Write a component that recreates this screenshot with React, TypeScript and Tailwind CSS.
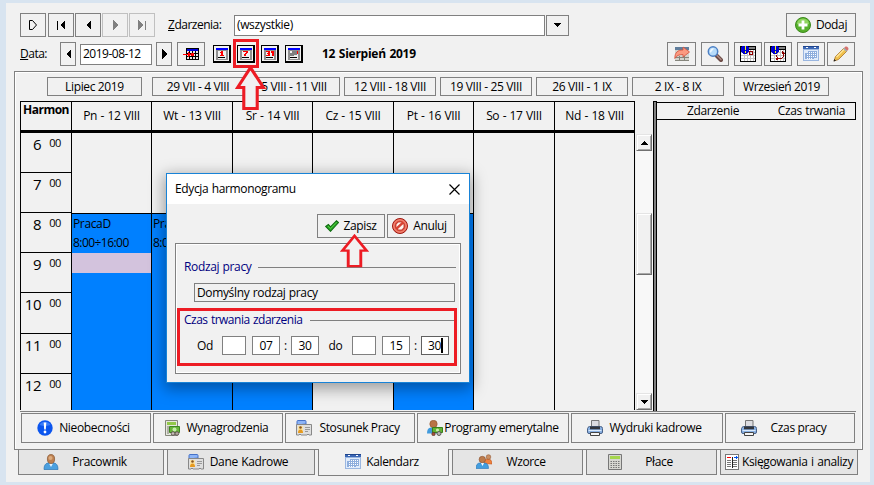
import type { ReactNode } from 'react'

const days = [
  { label: 'Pn - 12 VIII', w: 'w-[80px]', work: true, marked: true },
  { label: 'Wt - 13 VIII', w: 'w-[81px]', work: true },
  { label: 'Śr - 14 VIII', w: 'w-[80px]', work: true },
  { label: 'Cz - 15 VIII', w: 'w-[81px]', work: false },
  { label: 'Pt - 16 VIII', w: 'w-[80px]', work: true },
  { label: 'So - 17 VIII', w: 'w-[81px]', work: false },
  { label: 'Nd - 18 VIII', w: 'w-[80px]', work: false },
]

const hours = [
  { h: 6, size: 'h-[40px]' },
  { h: 7, size: 'h-[40px]' },
  { h: 8, size: 'h-[40px]' },
  { h: 9, size: 'h-[40px]' },
  { h: 10, size: 'h-[41px]' },
  { h: 11, size: 'h-[40px]' },
  { h: 12, size: 'h-[37px]' },
]

const periods = [
  { label: 'Lipiec 2019', cls: 'w-[95px] mr-[10px]' },
  { label: '29 VII - 4 VIII', cls: 'w-[92px] mr-[4px]' },
  { label: '5 VIII - 11 VIII', cls: 'w-[92px] mr-[4px]' },
  { label: '12 VIII - 18 VIII', cls: 'w-[92px] mr-[4px]' },
  { label: '19 VIII - 25 VIII', cls: 'w-[92px] mr-[4px]' },
  { label: '26 VIII - 1 IX', cls: 'w-[92px] mr-[4px]' },
  { label: '2 IX - 8 IX', cls: 'w-[92px] mr-[10px]' },
  { label: 'Wrzesień 2019', cls: 'w-[95px]' },
]

/* ---------- icons ---------- */

function Svg({ children, w = 16, h = 16, crisp = false }: { children: ReactNode; w?: number; h?: number; crisp?: boolean }) {
  return (
    <svg width={w} height={h} viewBox={`0 0 ${w} ${h}`} className="block shrink-0" fill="none" shapeRendering={crisp ? 'crispEdges' : 'auto'}>
      {children}
    </svg>
  )
}

const PlusIcon = () => (
  <Svg>
    <circle cx="8" cy="8" r="7.5" fill="#57b02c" stroke="#3d8a1d" />
    <path d="M2 7a6 5.5 0 0 1 12 0q-6 2-12 0" fill="#8fd45f" />
    <path d="M6.6 3.5h2.8v3.1h3.1v2.8H9.4v3.1H6.6V9.4H3.5V6.6h3.1z" fill="#fff" />
  </Svg>
)

const ShareIcon = () => (
  <Svg>
    <path d="M1 2h14v13H1z" fill="#d3d3cc" />
    <path d="M1 1h14v3H1z" fill="#5f7d9c" />
    <path d="M1 11.5h14M5.5 10v5M10.500 10v5M1 14.5h14" stroke="#85857c" />
    <path d="M.8 12.500C.8 6.500 3.500 4 9 4V1l6.500 5L9 11V8.500c-4 0-6.500 1-8.200 4z" fill="#fb9a80" stroke="#d6503c" strokeWidth=".8" />
  </Svg>
)

const LensIcon = () => (
  <Svg>
    <path d="M9.5 9.5l4.500 4.500" stroke="#6b4a45" strokeWidth="4" strokeLinecap="round" />
    <path d="M10 9.500l4 4" stroke="#b08b84" strokeWidth="1.300" strokeLinecap="round" />
    <circle cx="6" cy="5.500" r="4.700" fill="#b8dcfa" stroke="#4d80c4" strokeWidth="1.500" />
    <path d="M3 5.500a3 3 0 0 1 4-3L3.500 7z" fill="#eef8ff" />
  </Svg>
)

function AlertTable({ cycle = false }: { cycle?: boolean }) {
  return (
    <Svg crisp>
      <path d="M0 0h16v16H0z" fill="#000" />
      <path d="M1 4h14v11H1z" fill="#fff" />
      <path d="M8 1h7v2H8z" fill="#808080" />
      <path d="M4 4h1v11H4zM7 4h1v11H7zM10 4h1v11h-1zM13 4h1v11h-1zM1 6h14v1H1zM1 9h14v1H1zM1 12h14v1H1z" fill="#c4c4c4" />
      <path d="M2 0h6v1h1v5H8v1H7v1H3V7H2V6H1V1h1z" fill="#0000d0" />
      <path d="M5 0h1v4H5zM5 5h1v2H5z" fill="#ff0" />
      {cycle ? (
        <path d="M12 5h1v1h1v1h1v1h-3zM13 8h1v3h-1zM12 11h1v1h-1zM9 12h3v1H9zM6 9h1v2H6zM7 11h1v1H7zM6 12h3v1H8v1H6z" fill="#900000" />
      ) : (
        <path d="M9 5h4v4H9zM10 6v2h2V6z" fill="#900000" fillRule="evenodd" />
      )}
    </Svg>
  )
}

const CalendarIcon = () => (
  <Svg crisp>
    <path d="M0 0h16v15H0z" fill="#9ab6e0" />
    <path d="M1 4h14v10H1z" fill="#e1ecfb" />
    <path d="M0 0h16v3H0z" fill="#3b67b5" />
    <path d="M0 0h16v1H0z" fill="#1f458d" />
    <path d="M3 1h2v1H3zM11 1h2v1h-2z" fill="#fff" />
    <path d="M5 5h9v7H5zM2 7h9v6H2z" fill="#8eaedd" />
    <path d="M6 6h1v1H6zM8 6h1v1H8zM10 6h1v1h-1zM12 6h1v1h-1zM4 8h1v1H4zM6 8h1v1H6zM8 8h1v1H8zM10 8h1v1h-1zM12 8h1v1h-1zM4 10h1v1H4zM6 10h1v1H6zM8 10h1v1H8zM10 10h1v1h-1zM12 10h1v1h-1zM4 12h1v1H4zM6 12h1v1H6zM8 12h1v1H8z" fill="#fff" />
  </Svg>
)

const PencilIcon = () => (
  <Svg>
    <path d="M1 15l1.500-4.500L11 2l3 3-8.500 8.500z" fill="#f0c04c" stroke="#a7742a" strokeWidth=".8" />
    <path d="M3.500 11L11.500 3" stroke="#ffe69b" strokeWidth="1.200" />
    <path d="M10.500 2.500L12.500.5q1.500-.5 2.700 1.200.8 1.300-.2 2.300l-1.500 1.500z" fill="#d7716c" />
    <path d="M10.200 2.800l3 3 1-1-3-3z" fill="#9eb2b8" />
    <path d="M.5 15.500l.8-2.500 1.700 1.700z" fill="#222" />
  </Svg>
)

const GoToDateIcon = () => (
  <Svg w={16} h={12} crisp>
    <path d="M3 0h13v12H3z" fill="#000" />
    <path d="M4 1h11v2H4z" fill="#0000e0" />
    <path d="M4 3h2v2H4zM7 3h2v2H7zM10 3h2v2h-2zM13 3h2v2h-2zM4 6h2v2H4zM7 6h2v2H7zM10 6h2v2h-2zM13 6h2v2h-2zM4 9h2v2H4zM7 9h2v2H7zM10 9h2v2h-2zM13 9h2v2h-2z" fill="#e8e8e8" />
    <path d="M0 6h8v1H0zM5 4h1v5H5zM6 5h1v3H6zM8 5h3v3H8z" fill="#f00" />
  </Svg>
)

function ViewIcon({ children }: { children: ReactNode }) {
  return (
    <Svg w={18} h={18} crisp>
      <path d="M0 0h18v18H0z" fill="#000" />
      <path d="M1 1h15v15H1z" fill="#f1f1f1" />
      <path d="M3 3h12v12H3z" fill="#909090" />
      <path d="M5 6h8v8H5z" fill="#f1f1f1" />
      <path d="M3 3h12v2H3z" fill="#0000ff" />
      <path d="M5 12h7v1H5z" fill="#000" />
      {children}
    </Svg>
  )
}

const AlertIcon = () => (
  <Svg>
    <circle cx="8" cy="8" r="7.700" fill="#0b55ee" />
    <path d="M2.500 5A6.300 6.300 0 0 1 13.500 5Q8 7 2.500 5z" fill="#3a7cf8" />
    <path d="M6.700 2.500h2.600l-.5 7H7.200z" fill="#fff" />
    <circle cx="8" cy="12" r="1.400" fill="#fff" />
  </Svg>
)

const CalcMoneyIcon = () => (
  <Svg>
    <path d="M1.500.5h12v15h-12z" fill="#e5e6dd" stroke="#84867b" />
    <path d="M3 2h9v3H3z" fill="#92c849" />
    <path d="M3 7h2M3 9h2M3 11h2M3 13h2" stroke="#7a7a70" strokeWidth="1.100" />
    <path d="M5.500 6.500h10v6h-10z" fill="#68b53a" stroke="#3f8621" />
    <circle cx="10.500" cy="9.500" r="2" fill="#c5edaa" />
    <circle cx="9" cy="13.500" r="1.800" fill="#c8c2bc" stroke="#635a53" />
    <circle cx="13" cy="13.500" r="1.800" fill="#b6aaa2" stroke="#635a53" />
  </Svg>
)

const BadgeIcon = () => (
  <Svg>
    <path d="M1 5V1.500Q1 .5 2 .5h7q1 0 1 1V4z" fill="#8db4f7" stroke="#4672c8" />
    <path d="M.5 4.500h15v10.500H13l-1-1-1 1H5l-1-1-1 1H.5z" fill="#dfdfdf" stroke="#888" />
    <path d="M2 6h5v7H2z" fill="#fbe4a3" />
    <circle cx="4.500" cy="7.500" r="1.300" fill="#8b531c" />
    <path d="M2 13q0-3.500 2.500-3.500T7 13z" fill="#e59a20" />
    <path d="M9 7.500h5M9 9.500h5M9 11.500h3" stroke="#999" />
  </Svg>
)

const PersonIcon = () => (
  <Svg>
    <path d="M1 15.500q0-6 4-6.500h6q4 .5 4 6.500z" fill="#4ba0df" stroke="#2874b4" strokeWidth=".7" />
    <path d="M6 9.500h4L8 13z" fill="#e8f3ff" />
    <ellipse cx="8" cy="5" rx="3.600" ry="4.500" fill="#bd8051" stroke="#875630" strokeWidth=".7" />
    <ellipse cx="7.500" cy="4" rx="2" ry="2" fill="#dcab7e" />
  </Svg>
)

const PensionIcon = () => (
  <Svg>
    <path d="M0 13.500Q0 7.500 4 7.500h5q3 0 4 6z" fill="#429bdd" />
    <circle cx="6.500" cy="4" r="3.700" fill="#b97446" stroke="#8b522b" strokeWidth=".6" />
    <path d="M5.500 7.500h10v5h-10z" fill="#63b334" stroke="#36801b" />
    <circle cx="10.500" cy="10" r="1.600" fill="#c8efab" />
    <circle cx="6.500" cy="14" r="1.700" fill="#a6503a" stroke="#58352b" strokeWidth=".7" />
    <circle cx="12" cy="13.500" r="2" fill="#b6b6b0" stroke="#5b5b57" />
  </Svg>
)

const PeopleIcon = () => (
  <Svg>
    <path d="M8 9.500Q8 5 12 5t4 5z" fill="#ef813c" stroke="#bd4f1a" strokeWidth=".6" />
    <circle cx="12.500" cy="3" r="2.300" fill="#cc9063" stroke="#935b38" strokeWidth=".6" />
    <path d="M0 14.500Q0 9 4 9h4.500q4 0 4 5.500z" fill="#439edf" stroke="#2774b5" strokeWidth=".6" />
    <path d="M5 9h3l-1.500 3z" fill="#fff" />
    <circle cx="6.300" cy="5.500" r="3.200" fill="#bd7b4b" stroke="#865030" strokeWidth=".6" />
  </Svg>
)

const PrinterIcon = () => (
  <Svg>
    <path d="M4.500 7V.5h7.500V7z" fill="#dcdce0" stroke="#777" />
    <path d="M1 8q0-1.500 1.500-1.500h11Q15.500 6.500 15.500 8.500V12q0 1.500-1.500 1.500H2Q.5 13.500.5 12V8.500z" fill="#8ab1e2" stroke="#4a6288" />
    <path d="M3 6.500h10v2.800H3z" fill="#33363c" />
    <path d="M1.500 10.500h13" stroke="#d9e9fb" />
    <path d="M3.500 12.500h9v3h-9z" fill="#f6f6f6" stroke="#444" />
  </Svg>
)

const CalcIcon = () => (
  <Svg w={14}>
    <path d="M.5.500h13v15H.5z" fill="#d7d7d2" stroke="#777" />
    <path d="M2 2h10v3H2z" fill="#a5d64c" />
    <path d="M2.500 7.500h10M2.500 9.500h10M2.500 11.500h10M2.500 13.500h10" stroke="#777" strokeDasharray="1.500 1" />
  </Svg>
)

const LedgerIcon = () => (
  <Svg w={14} crisp>
    <path d="M0 0h14v16H0z" fill="#777" />
    <path d="M1 1h12v14H1z" fill="#fff" />
    <path d="M2 3h4v1H2z" fill="#f00" />
    <path d="M9 3h4v1H9zM10.500 2h1v3h-1z" fill="#0052ee" />
    <path d="M2 6h4v1H2zM8 6h4v1H8zM2 8h4v1H2zM8 8h4v1H8zM2 10h4v1H2zM8 10h4v1H8zM2 12h4v1H2zM8 12h4v1H8z" fill="#777" />
    <path d="M6.500 3h1v11h-1z" fill="#222" />
  </Svg>
)

const CheckIcon = () => (
  <Svg w={14} h={12}>
    <path d="M.7 6.500l2.700-2 2.100 2.300L11.500.8l2 1.700L5.500 11.300z" fill="#29ad26" stroke="#126d13" strokeWidth="1.100" />
    <path d="M3 6l2.500 2.500L11.500 2.200" stroke="#5fd048" strokeWidth=".8" />
  </Svg>
)

const CancelIcon = () => (
  <Svg>
    <circle cx="8" cy="8" r="7.500" fill="#e35443" stroke="#9e1710" />
    <circle cx="8" cy="8" r="6.200" stroke="#f59b87" />
    <circle cx="8" cy="8" r="4.200" fill="#fff4ef" stroke="#b72c20" />
    <path d="M4.500 10.700l6.500-6" stroke="#d84232" strokeWidth="2.500" />
  </Svg>
)

const Left = () => <Svg w={5} h={10} crisp><path d="M5 0v10L0 5z" fill="currentColor" /></Svg>
const Right = () => <Svg w={5} h={10} crisp><path d="M0 0v10l5-5z" fill="currentColor" /></Svg>

/* ---------- controls ---------- */

function Btn({ children, className = '' }: { children?: ReactNode; className?: string }) {
  return <button type="button" className={`flex shrink-0 items-center justify-center border border-[#808080] ${className}`}>{children}</button>
}

function Tool({ children, className = 'w-7' }: { children: ReactNode; className?: string }) {
  return <Btn className={`h-6 ${className}`}>{children}</Btn>
}

function ArrowUp({ className }: { className: string }) {
  return (
    <svg width="30" height="45" viewBox="0 0 30 45" preserveAspectRatio="none" className={`absolute ${className}`}>
      <path d="M15 2.500L27.500 22H21.500V42.500H8.500V22H2.500z" fill="#f1f1f1" stroke="#ed1c24" strokeWidth="3" />
    </svg>
  )
}

function ScrollBtn({ children, className = 'h-[17px]' }: { children?: ReactNode; className?: string }) {
  return (
    <div className={`flex w-4 shrink-0 items-center justify-center border border-r-[#707070] border-b-[#707070] border-t-[#e4e4e4] border-l-[#e4e4e4] bg-[#f1f1f1] shadow-[inset_1px_1px_0_#fff,inset_-1px_-1px_0_#a8a8a8] ${className}`}>
      {children}
    </div>
  )
}

function TimeBox({ value = '', className = '' }: { value?: string; className?: string }) {
  return <div className={`flex h-[19px] shrink-0 items-center justify-center border border-[#808080] bg-white ${className}`}>{value}</div>
}

function Toolbar() {
  return (
    <>
      <div className="flex h-6 items-center pl-[14px]">
        <Btn className="h-6 w-[26px]">
          <Svg w={8} h={10}><path d="M.5.500h3L7.500 5 3.500 9.500h-3z" stroke="#000" /></Svg>
        </Btn>
        <Btn className="ml-[2px] h-6 w-[26px] gap-[2px]"><i className="h-[9px] w-px bg-black" /><Left /></Btn>
        <Btn className="ml-px h-6 w-[26px]"><Left /></Btn>
        <Btn className="ml-px h-6 w-[26px] border-[#c0c0c0] text-[#808080]"><Right /></Btn>
        <Btn className="ml-px h-6 w-[26px] gap-[2px] border-[#c0c0c0] text-[#808080]"><Right /><i className="h-[9px] w-px bg-[#808080]" /></Btn>
        <span className="ml-[13px] w-[66px] tracking-[-0.5px]"><u>Z</u>darzenia:</span>
        <div className="flex h-[21px] w-[311px] items-center border border-[#808080] bg-white pl-[2px]">(wszystkie)</div>
        <Btn className="ml-px h-[21px] w-[23px]">
          <Svg w={7} h={4} crisp><path d="M0 0h7L3.500 4z" fill="#000" /></Svg>
        </Btn>
        <Btn className="ml-auto mr-[14px] h-6 w-[70px] gap-[5px]"><PlusIcon />Dodaj</Btn>
      </div>
      <div className="mt-[5px] flex h-6 items-center pl-[14px]">
        <span className="w-10 tracking-[-0.5px]"><u>D</u>ata:</span>
        <Btn className="h-6 w-4"><Left /></Btn>
        <div className="ml-1 mr-1 flex h-[21px] w-[72px] items-center border border-[#808080] bg-white pl-[2px] tracking-[-0.5px]">2019-08-12</div>
        <Btn className="h-6 w-4"><Right /></Btn>
        <Btn className="ml-[5px] h-6 w-7"><GoToDateIcon /></Btn>
        <div className="ml-2 flex gap-[6px]">
          <ViewIcon><path d="M7 7h1V6h2v4h1v1H7v-1h1V8H7z" fill="#f00" /></ViewIcon>
          <ViewIcon><path d="M6 6h5v2h-1v1H9v2H7V9h1V8h1V7H6z" fill="#f00" /></ViewIcon>
          <ViewIcon><path d="M5 6h4v5H5v-1h2V9H6V8h1V7H5zM10 6h3v5h-2V8h-1z" fill="#f00" /></ViewIcon>
          <ViewIcon><path d="M7 6h5v4H9v1H5V8h2z" fill="#808080" /><path d="M12 6h1v3h-1z" fill="#f00" /></ViewIcon>
        </div>
        <b className="ml-[19px] font-bold tracking-[-0.25px]">12 Sierpień 2019</b>
        <div className="ml-auto mr-[15px] flex">
          <Tool className="mr-[5px] w-[29px]"><ShareIcon /></Tool>
          <Tool className="mr-[5px] w-7"><LensIcon /></Tool>
          <Tool className="mr-[2px] w-7"><AlertTable /></Tool>
          <Tool className="mr-[5px] w-7"><AlertTable cycle /></Tool>
          <Tool className="mr-[2px] w-7"><CalendarIcon /></Tool>
          <Tool><PencilIcon /></Tool>
        </div>
      </div>
    </>
  )
}

function Schedule() {
  return (
    <div className="flex h-[309px] w-[615px] shrink-0 border-l border-black">
      <div className="w-[50px] shrink-0 border-t border-black">
        <div className="h-7 text-center font-bold leading-4 tracking-[-0.5px]">Harmon</div>
        <div className="h-[3px] bg-black" />
        {hours.map(({ h, size }) => (
          <div key={h} className={`flex justify-end border-black pr-[10px] ${size} ${h < 12 ? 'border-b' : ''}`}>
            <span className="mr-2 text-[15px] leading-[22px]">{h}</span>
            <span className="text-[11px] leading-[19px]">00</span>
          </div>
        ))}
      </div>
      {days.map((d) => (
        <div key={d.label} className={`shrink-0 border-l border-t border-black ${d.w}`}>
          <div className="flex h-7 items-center justify-center whitespace-nowrap">{d.label}</div>
          <div className="h-[3px] bg-black" />
          <div className="h-[80px]" />
          {d.work && (
            <div className="h-[197px] border-t border-black bg-[#0080ff]">
              <div className="h-[39px] pl-px leading-[19px]">
                <div>PracaD</div>
                <div className="tracking-[-0.55px]">8:00÷16:00</div>
              </div>
              {d.marked && <div className="h-5 bg-[#d3c3dd]" />}
            </div>
          )}
        </div>
      ))}
      <div className="w-px shrink-0 bg-black" />
    </div>
  )
}

function Scrollbar() {
  return (
    <div className="w-[18px] shrink-0 pl-px pt-[33px]">
      <div className="flex h-[276px] flex-col bg-[#f8f8f8]">
        <ScrollBtn><Svg w={7} h={4} crisp><path d="M0 4h7L3.500 0z" fill="#000" /></Svg></ScrollBtn>
        <div className="h-[62px]" />
        <ScrollBtn className="h-[62px]" />
        <ScrollBtn className="mt-auto h-[17px]"><Svg w={7} h={4} crisp><path d="M0 0h7L3.500 4z" fill="#000" /></Svg></ScrollBtn>
      </div>
    </div>
  )
}

function Dialog() {
  return (
    <div className="absolute left-[166px] top-[173px] h-[210px] w-[304px] border border-[#1883d7] bg-[#f1f1f1] shadow-[0_4px_14px_2px_rgba(0,0,0,0.35)]">
      <div className="flex h-[30px] items-center justify-between bg-white pl-2 pr-[9px]">
        <span>Edycja harmonogramu</span>
        <Svg w={11} h={11}><path d="M.5.500l10 10M10.500.5l-10 10" stroke="#000" strokeWidth="1.2" /></Svg>
      </div>
      <div className="mt-[10px] flex justify-end gap-[2px] pr-[14px]">
        <Btn className="h-6 w-[68px] gap-1"><CheckIcon />Zapisz</Btn>
        <Btn className="h-6 w-[68px] gap-[5px] pr-[3px]"><CancelIcon />Anuluj</Btn>
      </div>
      <div className="ml-2 mt-[5px] h-[131px] w-[286px] border border-[#808080] pt-[14px] shadow-[inset_1px_1px_0_#fff,inset_-1px_-1px_0_#fff]">
        <div className="flex h-[18px] items-center pl-2 pr-1 text-[#000080]">
          <span className="w-[74px]">Rodzaj pracy</span>
          <div className="h-px flex-1 bg-[#808080]" />
        </div>
        <div className="ml-[18px] mt-[7px] flex h-[19px] w-[261px] items-center border border-[#808080] pl-[2px]">Domyślny rodzaj pracy</div>
        <div className="mt-[9px] flex h-[18px] items-center pl-2 pr-1 text-[#000080]">
          <span className="w-[126px] tracking-[-0.5px]">Czas trwania zdarzenia</span>
          <div className="h-px flex-1 bg-[#808080]" />
        </div>
        <div className="mt-[7px] flex items-center pl-[21px]">
          <span className="w-[25px]">Od</span>
          <TimeBox className="w-6" />
          <TimeBox value="07" className="ml-[6px] w-7" />
          <span className="w-[11px] text-center">:</span>
          <TimeBox value="30" className="w-7" />
          <span className="w-[33px] text-center">do</span>
          <TimeBox className="w-6" />
          <TimeBox value="15" className="ml-[6px] w-7" />
          <span className="w-[11px] text-center">:</span>
          <div className="flex h-[19px] w-7 items-center justify-end border border-[#606060] bg-white pr-[5px]">
            30<i className="h-[15px] w-[2px] bg-black" />
          </div>
        </div>
      </div>
    </div>
  )
}

function Shortcut({ icon, label, className }: { icon: ReactNode; label: string; className: string }) {
  return <Btn className={`h-[30px] whitespace-nowrap ${className}`}>{icon}{label}</Btn>
}

function Tab({ icon, label, className }: { icon: ReactNode; label: string; className: string }) {
  return (
    <div className={`flex shrink-0 items-center justify-center whitespace-nowrap border border-t-0 border-[#808080] ${className}`}>
      {icon}{label}
    </div>
  )
}

export default function App() {
  return (
    <div className="relative h-[485px] w-[874px] overflow-hidden bg-[#d8e4f0] pl-[6px] pt-[3px] font-['Open_Sans','Noto_Sans',sans-serif] text-[12px] leading-4 tracking-[-0.36px] text-black [word-spacing:0.7px]">
      <div className="h-[479px] w-[864px] bg-[#f1f1f1] pt-[10px]">
        <Toolbar />

        <div className="ml-2 mt-[5px] h-[379px] w-[849px] border border-[#808080] pt-[5px] shadow-[inset_1px_1px_0_#fff,inset_-1px_0_0_#fff]">
          <div className="flex pl-8">
            {periods.map((p) => (
              <Btn key={p.label} className={`h-[19px] whitespace-nowrap ${p.cls}`}>{p.label}</Btn>
            ))}
          </div>

          <div className="mt-[5px] flex pl-[5px]">
            <Schedule />
            <Scrollbar />
            <div className="h-[310px] w-1 shrink-0 border-x border-t border-black bg-[#808080]" />
            <div className="mt-px flex h-[18px] w-[199px] items-center justify-between border border-l-0 border-black pl-[30px] pr-[10px]">
              <span>Zdarzenie</span>
              <span>Czas trwania</span>
            </div>
          </div>

          <div className="ml-[5px] h-px w-[836px] bg-[#808080]" />
          <div className="mt-px flex gap-[2px] pl-[6px]">
            <Shortcut icon={<AlertIcon />} label="Nieobecności" className="w-[130px] gap-[6px] pr-[5px]" />
            <Shortcut icon={<CalcMoneyIcon />} label="Wynagrodzenia" className="w-[130px] gap-[7px] pr-1" />
            <Shortcut icon={<BadgeIcon />} label="Stosunek Pracy" className="w-[130px] gap-[7px] pr-1" />
            <Shortcut icon={<PensionIcon />} label="Programy emerytalne" className="w-[152px] gap-px" />
            <Shortcut icon={<PrinterIcon />} label="Wydruki kadrowe" className="w-[152px] gap-[6px] pr-[5px]" />
            <Shortcut icon={<PrinterIcon />} label="Czas pracy" className="w-[130px] gap-[14px] pr-[13px]" />
          </div>
        </div>

        <div className="flex pl-3">
          <Tab icon={<PersonIcon />} label="Pracownik" className="mr-[3px] h-[25px] w-[146px] gap-[13px] bg-[#e5e5e5] pr-[12px]" />
          <Tab icon={<BadgeIcon />} label="Dane Kadrowe" className="mr-[3px] h-[25px] w-[148px] gap-[6px] bg-[#e5e5e5] pr-[6px]" />
          <Tab icon={<CalendarIcon />} label="Kalendarz" className="-mt-px mr-[3px] h-[27px] w-[131px] gap-[5px] bg-[#f1f1f1] pr-[3px]" />
          <Tab icon={<PeopleIcon />} label="Wzorce" className="mr-[3px] h-[25px] w-[131px] gap-[14px] bg-[#e5e5e5] pr-[13px]" />
          <Tab icon={<CalcIcon />} label="Płace" className="mr-[3px] h-[25px] w-[131px] gap-[23px] bg-[#e5e5e5] pr-[22px]" />
          <Tab icon={<LedgerIcon />} label="Księgowania i analizy" className="h-[25px] w-[138px] gap-[3px] bg-[#e5e5e5]" />
        </div>
      </div>

      {/* walkthrough markers */}
      <div className="absolute left-[233px] top-[39px] h-[29px] w-[26px] border-[3px] border-[#ed1c24]" />
      <ArrowUp className="left-[235px] top-[65px] h-[46px] w-[31px]" />
      <Dialog />
      <div className="absolute left-[177px] top-[308px] h-[58px] w-[280px] border-[3px] border-[#ed1c24]" />
      <ArrowUp className="left-[340px] top-[234px] h-[34px] w-[29px]" />
    </div>
  )
}
